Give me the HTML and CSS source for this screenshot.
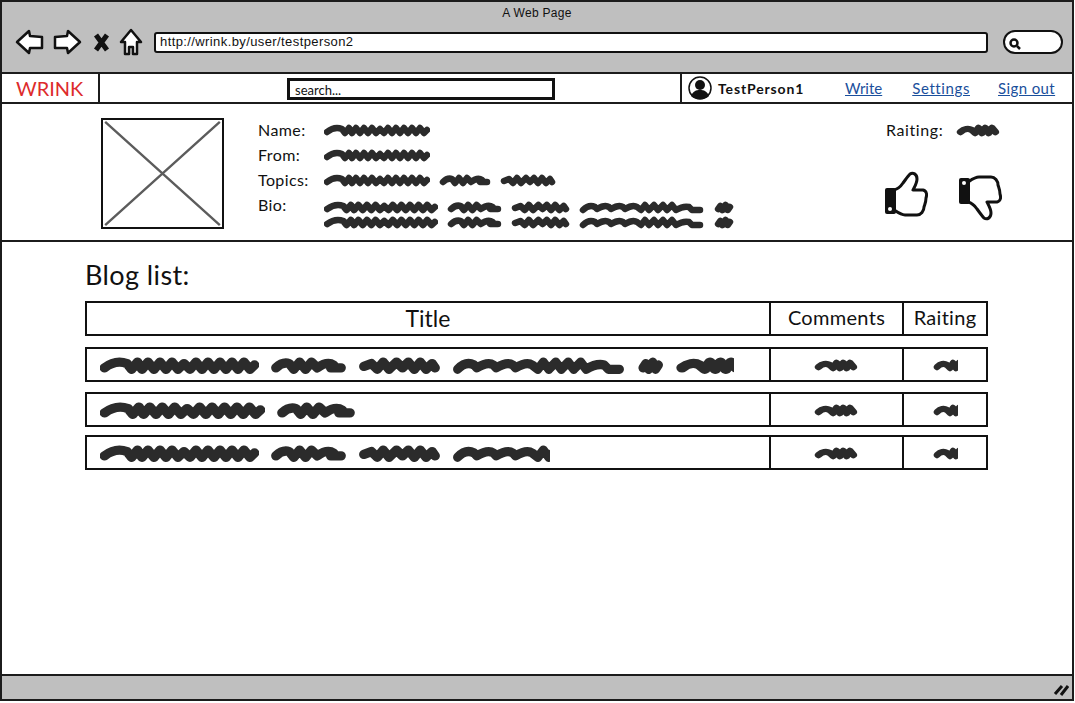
FILE: index.html
```html
<!DOCTYPE html>
<html lang="en">
<head>
    <meta charset="UTF-8">
    <meta name="viewport" content="width=device-width, initial-scale=1.0">
    <title>A Web Page</title>
    <link rel="stylesheet" href="styles.css">
</head>
<body>

    <!-- shapes used again and again -->
    <svg class="defs" width="0" height="0">
        <symbol id="w-long" viewBox="0 0 106 14" preserveAspectRatio="none">
            <path d="M3 9C8 5 13 4 18 6L21 10L25 5L28 10L32 5L36 10L40 5L44 10L48 5L52 10L56 6L60 10L64 5L68 10L72 5L76 10L80 5L84 10L88 5L92 10L96 5L100 10L103 7"/>
        </symbol>
        <symbol id="w-mid" viewBox="0 0 52 14" preserveAspectRatio="none">
            <path d="M4 9C7 6 10 5 13 6L16 10L20 5L24 10L28 5L32 9C36 6 40 5 43 7L41 9L48 9"/>
        </symbol>
        <symbol id="w-short" viewBox="0 0 56 14" preserveAspectRatio="none">
            <path d="M4 8L9 6L13 10L17 5L21 10L26 5L30 9L34 5L38 10L42 5L46 10L50 6L52 9"/>
        </symbol>
        <symbol id="w-wide" viewBox="0 0 125 14" preserveAspectRatio="none">
            <path d="M4 10C8 6 12 5 16 7L18 9C23 6 27 5 30 7L32 9C37 6 41 5 44 7L46 9C51 6 55 5 58 7L62 10L66 5L70 10L75 5L79 10L84 5L88 10L93 5L97 10C102 7 106 6 110 7L113 10L121 10"/>
        </symbol>
        <symbol id="w-tiny" viewBox="0 0 40 14" preserveAspectRatio="none">
            <path d="M4 9C7 6 11 5 14 7L17 10L20 5L23 10L26 5L29 10L32 5L35 9"/>
        </symbol>
        <symbol id="w-dot" viewBox="0 0 20 14" preserveAspectRatio="none">
            <path d="M5 9L7 6L9 10L12 5L14 10L16 7"/>
        </symbol>
        <symbol id="thumb" viewBox="0 0 44 46">
            <path class="hand" d="M10 19C14 18 17 15 19 12C22 8 24 5 26 3C29 1 33 3 33 8C33 12 31 15 29 19L39 19C43 20 43 24 42 27C42 31 41 33 40 36C40 40 37 44 33 44L21 44C17 44 13 41 10 39Z"/>
            <rect class="cuff" x="1" y="17" width="11" height="26" rx="2"/>
            <circle class="cuff-dot" cx="6" cy="38" r="2"/>
        </symbol>
    </svg>

    <div class="window">
        <header class="chrome">
            <div class="chrome-title">A Web Page</div>
            <div class="chrome-tools">
                <svg class="icon" width="29" height="26" viewBox="0 0 29 26">
                    <path class="tool-line" d="M2 13L14 2L15 7L27 8L27 19L15 19L14 24Z"/>
                </svg>
                <svg class="icon" width="29" height="26" viewBox="0 0 29 26">
                    <path class="tool-line" d="M27 13L15 2L14 7L2 8L2 19L14 19L15 24Z"/>
                </svg>
                <svg class="icon icon-x" width="17" height="21" viewBox="0 0 17 21">
                    <path class="tool-x" d="M3 3L14 18M14 3L3 18"/>
                </svg>
                <svg class="icon icon-home" width="24" height="28" viewBox="0 0 24 28">
                    <path class="tool-line" d="M12 2L22 14L18 14L18 26L14 26L14 19L10 19L10 26L6 26L6 14L2 14Z"/>
                </svg>
                <div class="address">http://wrink.by/user/testperson2</div>
                <div class="chrome-search">
                    <svg width="14" height="14" viewBox="0 0 14 14">
                        <circle class="lens" cx="6" cy="6" r="3.5"/>
                        <path class="lens" d="M9 9L12 12"/>
                    </svg>
                </div>
            </div>
        </header>

        <nav class="nav">
            <div class="logo">WRINK</div>
            <div class="nav-middle">
                <div class="search">search...</div>
            </div>
            <div class="nav-user">
                <svg class="avatar" width="24" height="24" viewBox="0 0 24 24">
                    <circle class="avatar-ring" cx="12" cy="12" r="11"/>
                    <circle class="avatar-fill" cx="12" cy="9" r="5"/>
                    <path class="avatar-fill" d="M3 20C5 15 8 14 12 14C16 14 19 15 21 20C18 24 6 24 3 20Z"/>
                </svg>
                <span class="user-name">TestPerson1</span>
                <a class="nav-link link-write" href="#">Write</a>
                <a class="nav-link link-settings" href="#">Settings</a>
                <a class="nav-link link-out" href="#">Sign out</a>
            </div>
        </nav>

        <section class="profile">
            <svg class="photo" width="123" height="111" viewBox="0 0 124 112">
                <path class="photo-x" d="M2 2L122 110M122 2L2 110"/>
            </svg>
            <div class="details">
                <div class="detail-row">
                    <span class="detail-label">Name:</span>
                    <svg class="scr" width="106" height="14"><use href="#w-long"/></svg>
                </div>
                <div class="detail-row">
                    <span class="detail-label">From:</span>
                    <svg class="scr" width="106" height="14"><use href="#w-long"/></svg>
                </div>
                <div class="detail-row">
                    <span class="detail-label">Topics:</span>
                    <svg class="scr" width="106" height="14"><use href="#w-long"/></svg>
                    <svg class="scr" width="52" height="14"><use href="#w-mid"/></svg>
                    <svg class="scr" width="56" height="14"><use href="#w-short"/></svg>
                </div>
                <div class="detail-row detail-bio">
                    <span class="detail-label">Bio:</span>
                    <div class="bio-lines">
                        <div class="bio-line">
                            <svg class="scr" width="114" height="14"><use href="#w-long"/></svg>
                            <svg class="scr" width="55" height="14"><use href="#w-mid"/></svg>
                            <svg class="scr" width="59" height="14"><use href="#w-short"/></svg>
                            <svg class="scr" width="125" height="14"><use href="#w-wide"/></svg>
                            <svg class="scr" width="21" height="14"><use href="#w-dot"/></svg>
                        </div>
                        <div class="bio-line">
                            <svg class="scr" width="114" height="14"><use href="#w-long"/></svg>
                            <svg class="scr" width="55" height="14"><use href="#w-mid"/></svg>
                            <svg class="scr" width="59" height="14"><use href="#w-short"/></svg>
                            <svg class="scr" width="125" height="14"><use href="#w-wide"/></svg>
                            <svg class="scr" width="21" height="14"><use href="#w-dot"/></svg>
                        </div>
                    </div>
                </div>
            </div>
            <div class="rating">
                <div class="rating-top">
                    <span>Raiting:</span>
                    <svg class="scr" width="45" height="14"><use href="#w-tiny"/></svg>
                </div>
                <div class="thumbs">
                    <svg width="44" height="46"><use href="#thumb"/></svg>
                    <svg class="thumb-down" width="44" height="46"><use href="#thumb"/></svg>
                </div>
            </div>
        </section>

        <main class="blog">
            <h2 class="blog-title">Blog list:</h2>

            <div class="row row-head">
                <div class="cell cell-title">Title</div>
                <div class="cell">Comments</div>
                <div class="cell">Raiting</div>
            </div>

            <div class="row">
                <div class="cell cell-title cell-scr">
                    <svg class="scr" width="159" height="20"><use href="#w-long"/></svg>
                    <svg class="scr" width="77" height="20"><use href="#w-mid"/></svg>
                    <svg class="scr" width="83" height="20"><use href="#w-short"/></svg>
                    <svg class="scr" width="173" height="20"><use href="#w-wide"/></svg>
                    <svg class="scr" width="28" height="20"><use href="#w-dot"/></svg>
                    <svg class="scr" width="59" height="20"><use href="#w-tiny" width="70" height="20"/></svg>
                </div>
                <div class="cell"><svg class="scr" width="45" height="14"><use href="#w-tiny"/></svg></div>
                <div class="cell"><svg class="scr" width="25" height="14"><use href="#w-tiny" width="40" height="14"/></svg></div>
            </div>

            <div class="row row-second">
                <div class="cell cell-title cell-scr">
                    <svg class="scr" width="165" height="20"><use href="#w-long"/></svg>
                    <svg class="scr" width="80" height="20"><use href="#w-mid"/></svg>
                </div>
                <div class="cell"><svg class="scr" width="45" height="14"><use href="#w-tiny"/></svg></div>
                <div class="cell"><svg class="scr" width="25" height="14"><use href="#w-tiny" width="40" height="14"/></svg></div>
            </div>

            <div class="row row-third">
                <div class="cell cell-title cell-scr">
                    <svg class="scr" width="159" height="20"><use href="#w-long"/></svg>
                    <svg class="scr" width="77" height="20"><use href="#w-mid"/></svg>
                    <svg class="scr" width="83" height="20"><use href="#w-short"/></svg>
                    <svg class="scr" width="98" height="20"><use href="#w-wide" width="173" height="20"/></svg>
                </div>
                <div class="cell"><svg class="scr" width="45" height="14"><use href="#w-tiny"/></svg></div>
                <div class="cell"><svg class="scr" width="25" height="14"><use href="#w-tiny" width="40" height="14"/></svg></div>
            </div>
        </main>

        <footer class="status">
            <svg width="16" height="14" viewBox="0 0 16 14">
                <path class="grip" d="M2 12L9 4M8 13L15 4"/>
            </svg>
        </footer>
    </div>

</body>
</html>
```

FILE: styles.css
```css
html, body {
    margin: 0;
    padding: 0;
}

body {
    width: 1075px;
    height: 703px;
    overflow: hidden;
    background-color: white;
    color: #111;
    font-family: Lato, sans-serif;
}

.defs {
    display: block;
}

.window {
    box-sizing: border-box;
    width: 1074px;
    height: 701px;
    border: 2px solid #1c1c1c;
    display: flex;
    flex-direction: column;
}

/* browser bar */
.chrome {
    height: 70px;
    background-color: #bfbfbf;
    flex-shrink: 0;
}

.chrome-title {
    text-align: center;
    font-family: "Liberation Sans", sans-serif;
    font-size: 12px;
    line-height: 14px;
    padding-top: 4px;
    letter-spacing: 0.3px;
}

.chrome-tools {
    display: flex;
    align-items: center;
    height: 30px;
    margin-top: 7px;
    padding-left: 13px;
}

.icon {
    margin-right: 9px;
}

.icon-x {
    margin-left: 2px;
    margin-right: 9px;
}

.icon-home {
    margin-right: 11px;
}

.tool-line {
    fill: white;
    stroke: #111;
    stroke-width: 2.5;
    stroke-linejoin: round;
}

.tool-x {
    fill: none;
    stroke: #111;
    stroke-width: 5;
}

.address {
    box-sizing: border-box;
    width: 834px;
    height: 21px;
    border: 2px solid #111;
    border-radius: 3px;
    background-color: white;
    font-family: "Liberation Sans", sans-serif;
    font-size: 13px;
    line-height: 16px;
    padding-left: 4px;
    letter-spacing: 0.4px;
}

.chrome-search {
    box-sizing: border-box;
    width: 60px;
    height: 24px;
    margin-left: 15px;
    border: 2px solid #111;
    border-radius: 12px;
    background-color: white;
    padding: 3px 0 0 3px;
}

.lens {
    fill: none;
    stroke: #111;
    stroke-width: 2.5;
}

/* nav */
.nav {
    display: flex;
    height: 32px;
    box-sizing: border-box;
    border-top: 2px solid #1c1c1c;
    border-bottom: 2px solid #1c1c1c;
    flex-shrink: 0;
}

.logo {
    box-sizing: border-box;
    width: 98px;
    border-right: 2px solid #1c1c1c;
    color: #dd2b2b;
    font-size: 20px;
    line-height: 28px;
    padding-left: 14px;
}

.nav-middle {
    box-sizing: border-box;
    width: 580px;
    padding: 4px 0 0 187px;
}

.search {
    box-sizing: border-box;
    width: 268px;
    height: 22px;
    border: 3px solid #111;
    font-size: 13px;
    line-height: 18px;
    padding-left: 5px;
}

.nav-user {
    box-sizing: border-box;
    flex: 1;
    display: flex;
    align-items: center;
    border-left: 2px solid #1c1c1c;
    padding-left: 6px;
}

.avatar {
    margin-right: 6px;
}

.avatar-ring {
    fill: white;
    stroke: #111;
    stroke-width: 1.5;
}

.avatar-fill {
    fill: #111;
}

.user-name {
    font-weight: bold;
    font-size: 14px;
    letter-spacing: 0.85px;
    width: 127px;
}

.nav-link {
    color: #1a4f9c;
    font-size: 15px;
}

.link-write {
    margin-right: 30px;
}

.link-settings {
    margin-right: 28px;
    letter-spacing: 0.6px;
}

.link-out {
    letter-spacing: 0.4px;
}

/* profile */
.profile {
    display: flex;
    height: 138px;
    box-sizing: border-box;
    border-bottom: 2px solid #1c1c1c;
    flex-shrink: 0;
}

.photo {
    box-sizing: border-box;
    margin: 14px 0 0 99px;
    border: 2px solid #111;
    flex-shrink: 0;
}

.photo-x {
    fill: none;
    stroke: #5c5c5c;
    stroke-width: 2.5;
}

.details {
    margin-left: 34px;
    padding-top: 13px;
    width: 590px;
}

.detail-row {
    display: flex;
    align-items: center;
    gap: 9px;
    height: 25px;
    font-size: 16px;
    letter-spacing: 0.4px;
}

.detail-label {
    flex-shrink: 0;
    width: 57px;
}

.detail-bio {
    align-items: flex-start;
    line-height: 26px;
}

.bio-lines {
    padding-top: 8px;
}

.bio-line {
    display: flex;
    gap: 9px;
    height: 15px;
}

.scr {
    display: block;
    flex-shrink: 0;
}

symbol path {
    fill: none;
    stroke: #2b2b2b;
    stroke-width: 6.5;
    stroke-linejoin: round;
    stroke-linecap: round;
}

symbol .hand {
    fill: white;
    stroke: #111;
    stroke-width: 3;
}

.cuff {
    fill: #111;
}

.cuff-dot {
    fill: white;
}

.rating {
    margin-left: 38px;
    padding-top: 13px;
    font-size: 16px;
}

.rating-top {
    display: flex;
    align-items: center;
    gap: 13px;
    height: 25px;
    letter-spacing: 0.6px;
}

.thumbs {
    display: flex;
    gap: 30px;
    margin: 29px 0 0 -2px;
}

.thumb-down {
    transform: scaleY(-1);
    margin-top: 4px;
}

/* blog list */
.blog {
    flex: 1;
    padding: 16px 0 0 83px;
}

.blog-title {
    margin: 0 0 10px 0;
    font-weight: normal;
    font-size: 27px;
    line-height: 33px;
    letter-spacing: 0.4px;
}

.row {
    display: grid;
    grid-template-columns: 686px 133px 84px;
    width: 903px;
    height: 35px;
    margin-top: 10px;
    font-size: 20px;
    letter-spacing: 0.3px;
}

.row-head {
    margin-top: 0;
    height: 35px;
    margin-bottom: 11px;
}

.row-head .cell {
    padding-bottom: 3px;
}

.row-second {
    margin-top: 10px;
}

.row-third {
    margin-top: 8px;
}

.cell {
    box-sizing: border-box;
    display: flex;
    align-items: center;
    justify-content: center;
    border: 2px solid #111;
    border-left-width: 0;
}

.cell-title {
    border-left-width: 2px;
}

.cell-scr {
    justify-content: flex-start;
    gap: 11px;
    padding-left: 13px;
}

.row-head .cell-title {
    font-size: 23px;
    letter-spacing: 0;
    padding-bottom: 2px;
}

/* status bar */
.status {
    height: 25px;
    box-sizing: border-box;
    border-top: 2px solid #1c1c1c;
    background-color: #bfbfbf;
    display: flex;
    justify-content: flex-end;
    align-items: flex-end;
    padding: 0 3px 3px 0;
    flex-shrink: 0;
}

.grip {
    fill: none;
    stroke: #111;
    stroke-width: 3;
}
```
